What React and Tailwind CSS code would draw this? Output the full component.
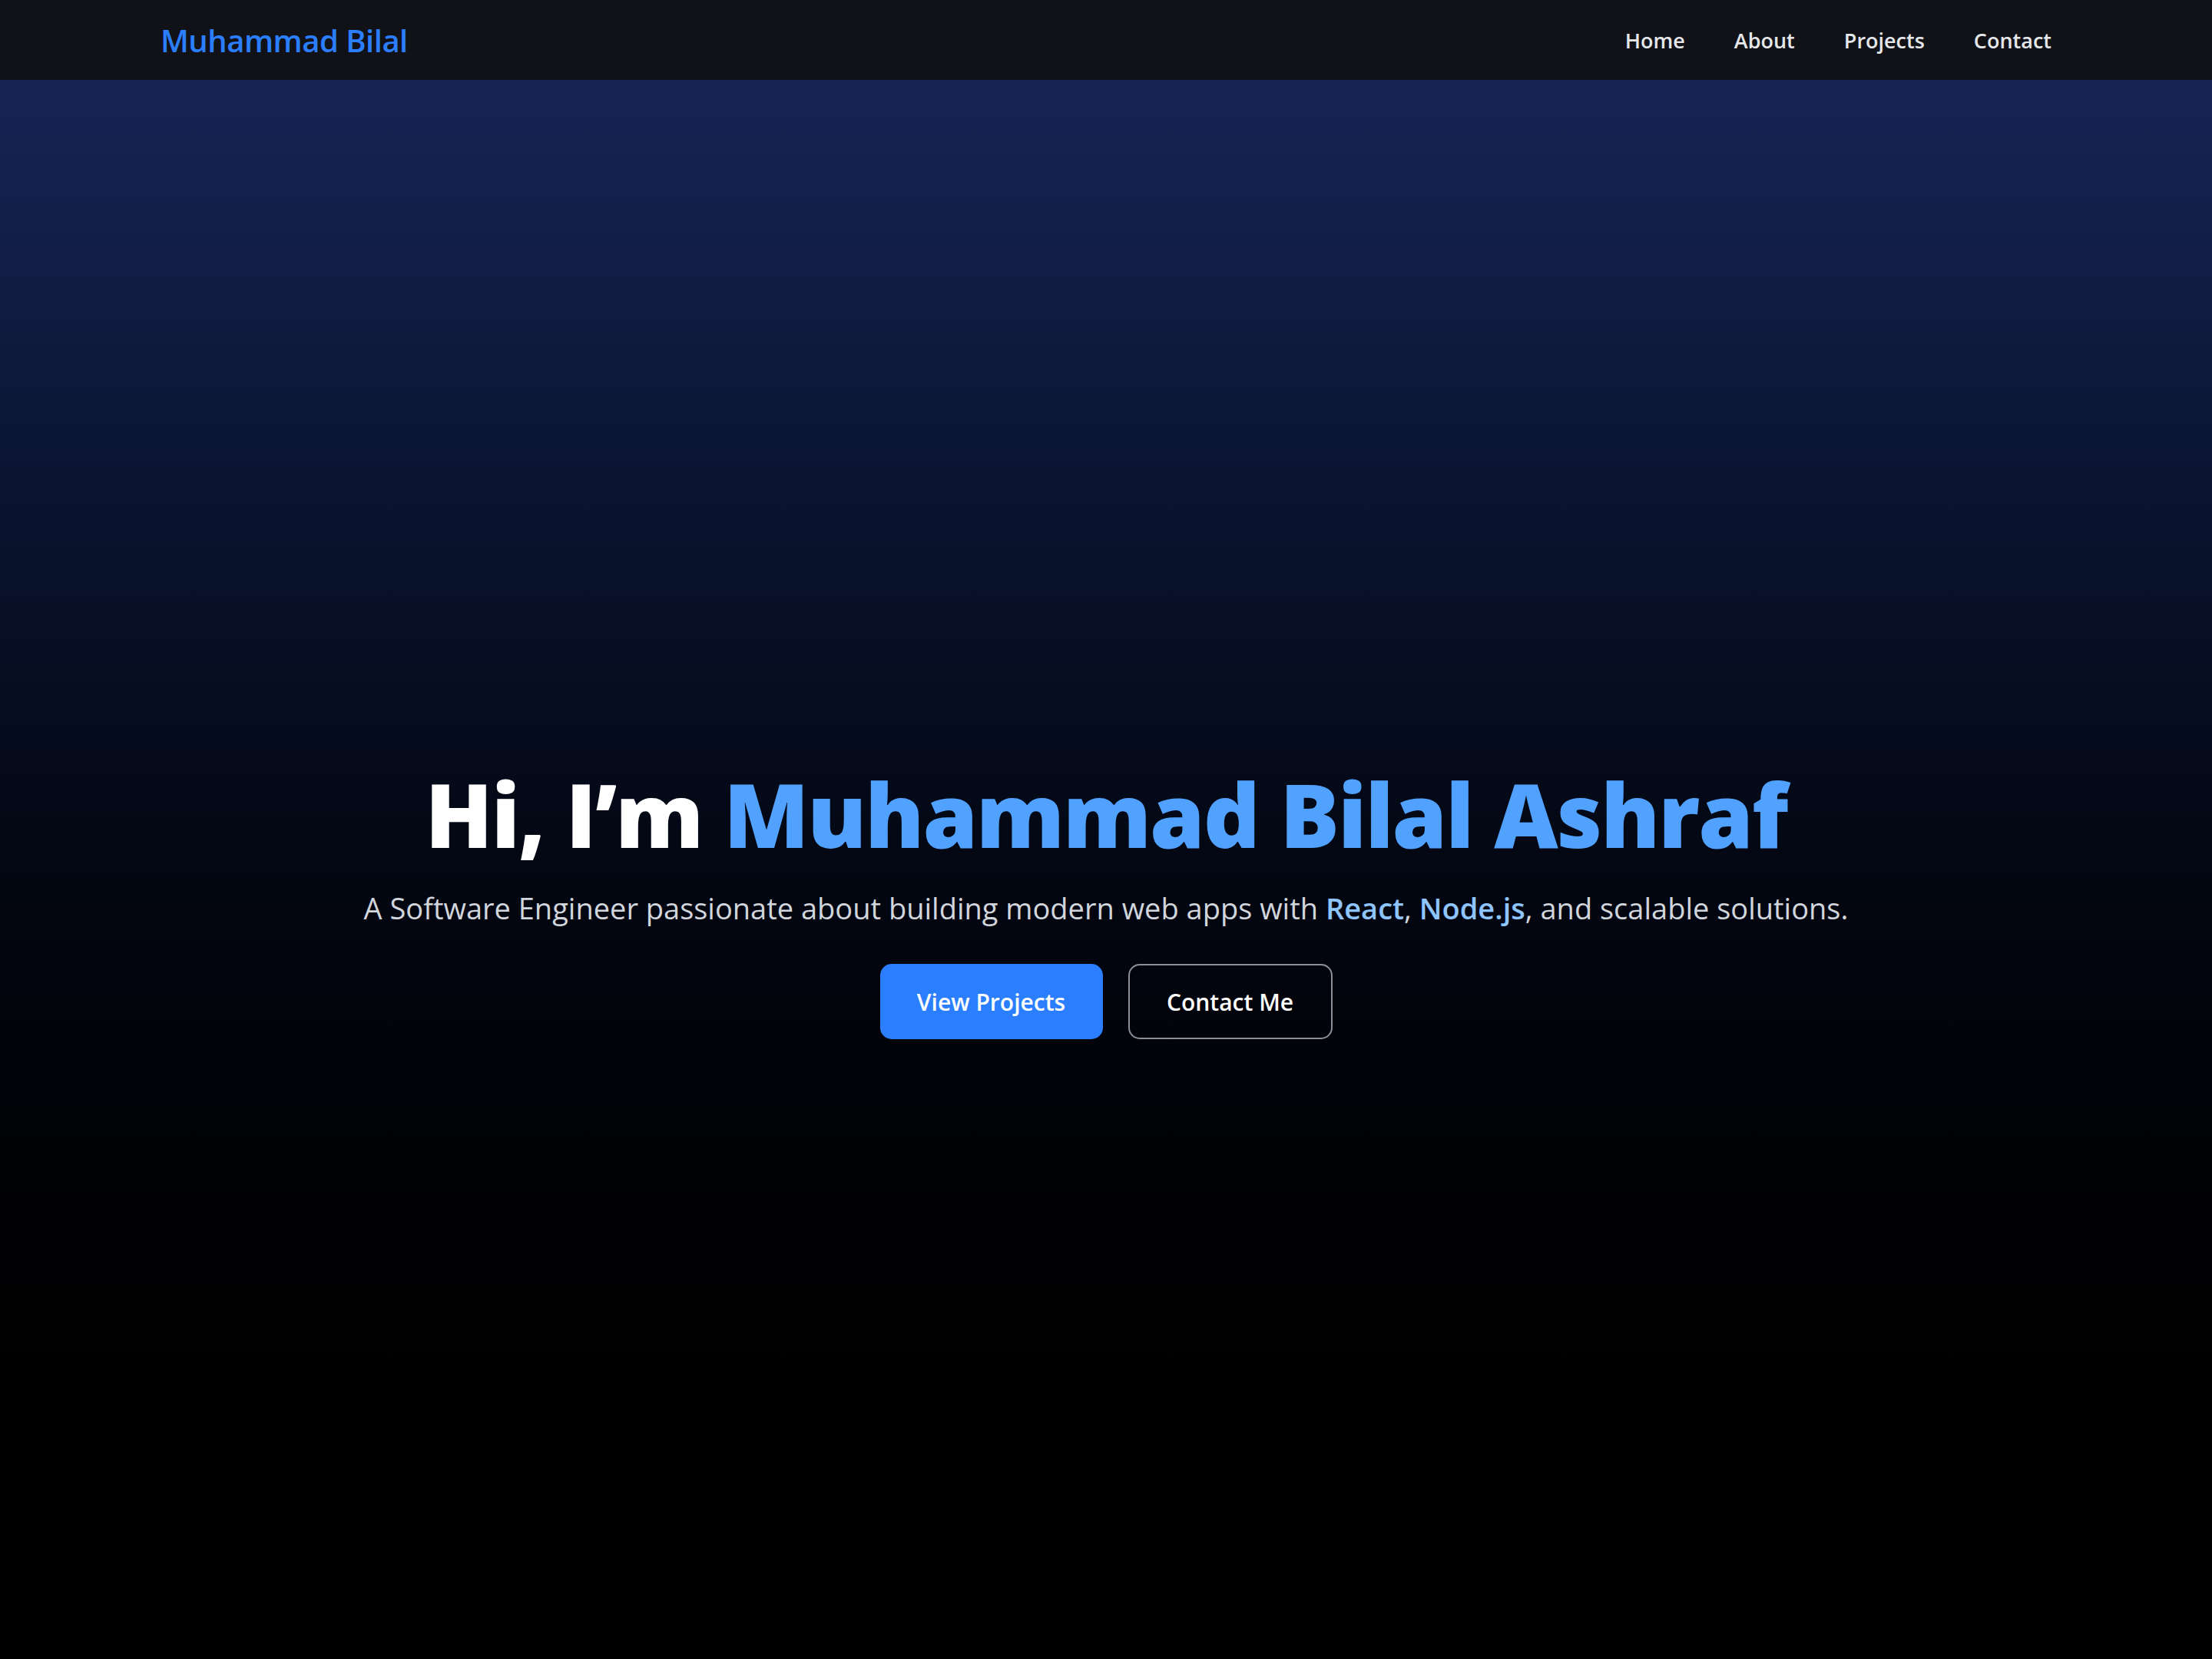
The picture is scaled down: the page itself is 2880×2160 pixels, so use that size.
export default function App() {
  const links = ["Home", "About", "Projects", "Contact"];

  return (
    <div className="min-h-screen bg-black font-['Open_Sans',_'Noto_Sans',_sans-serif]">
      {/* navbar */}
      <nav className="h-[104px] bg-[#111217] flex items-center justify-between px-[209px]">
        <a href="#" className="text-[40px] font-semibold text-blue-500 tracking-[-0.5px] pt-[2px]">
          Muhammad Bilal
        </a>
        <ul className="flex items-center gap-[64px] pt-[2px]">
          {links.map((l) => (
            <li key={l}>
              <a href="#" className="text-[27px] font-semibold text-gray-200">{l}</a>
            </li>
          ))}
        </ul>
      </nav>

      {/* hero */}
      <section className="h-[2056px] bg-linear-to-b from-blue-950 via-gray-950 to-black flex flex-col items-center pt-[887px] text-center">
        <h1 className="text-[115px] leading-[1.2] font-extrabold text-white tracking-[-2px]">
          Hi, I’m <span className="text-blue-400">Muhammad Bilal Ashraf</span>
        </h1>
        <p className="mt-[25px] text-[38px] text-gray-300">
          A Software Engineer passionate about building modern web apps with{" "}
          <span className="text-blue-300 font-semibold">React</span>,{" "}
          <span className="text-blue-300 font-semibold">Node.js</span>, and scalable solutions.
        </p>
        <div className="mt-[44px] flex items-center gap-[33px]">
          <a href="#" className="w-[290px] h-[98px] flex items-center justify-center rounded-[15px] bg-blue-500 text-white text-[30px] font-semibold">
            View Projects
          </a>
          <a href="#" className="w-[266px] h-[98px] flex items-center justify-center rounded-[15px] border-2 border-[#8a909a] text-white text-[30px] font-semibold">
            Contact Me
          </a>
        </div>
      </section>
    </div>
  );
}
